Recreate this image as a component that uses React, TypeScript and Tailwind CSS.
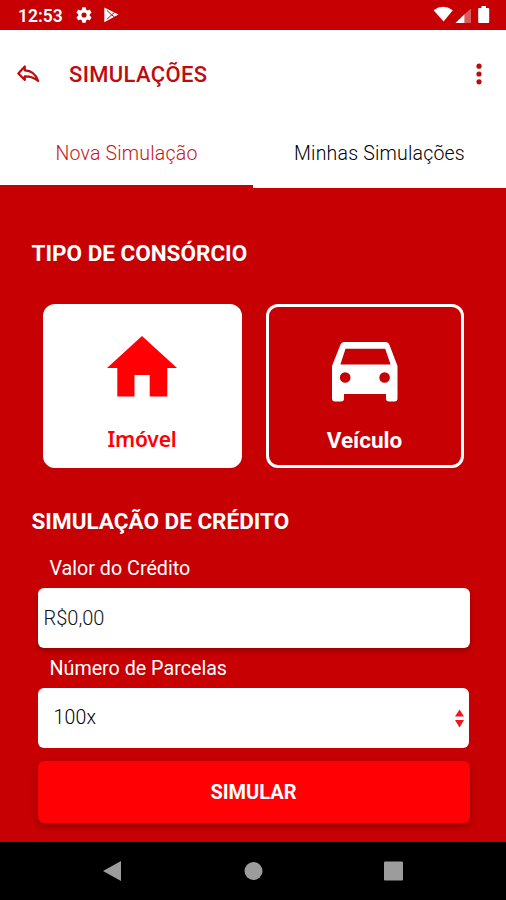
import { useState } from "react";

function StatusBar() {
  return (
    <div className="flex h-[29.5px] items-center justify-between bg-[#c60003] pr-4 pl-[18px] text-white">
      <div className="flex items-center">
        <span className="w-[45px] pt-[3px] text-[17.5px] leading-none font-semibold whitespace-nowrap">12:53</span>
        <svg width="16" height="16" viewBox="2 2 20 20" fill="currentColor" className="ml-[13px]">
          <path d="M19.14 12.94c.04-.3.06-.61.06-.94 0-.32-.02-.64-.07-.94l2.03-1.58a.49.49 0 0 0 .12-.61l-1.92-3.32a.488.488 0 0 0-.59-.22l-2.39.96c-.5-.38-1.03-.7-1.62-.94l-.36-2.54a.484.484 0 0 0-.48-.41h-3.84c-.24 0-.43.17-.47.41l-.36 2.54c-.59.24-1.13.57-1.62.94l-2.39-.96c-.22-.08-.47 0-.59.22L2.74 8.87c-.12.21-.08.47.12.61l2.03 1.58c-.05.3-.09.63-.09.94s.02.64.07.94l-2.03 1.58a.49.49 0 0 0-.12.61l1.92 3.32c.12.22.37.29.59.22l2.39-.96c.5.38 1.03.7 1.62.94l.36 2.54c.05.24.24.41.48.41h3.84c.24 0 .44-.17.47-.41l.36-2.54c.59-.24 1.13-.56 1.62-.94l2.39.96c.22.08.47 0 .59-.22l1.92-3.32c.12-.22.07-.47-.12-.61l-2.01-1.58zM12 15.2a3.2 3.2 0 1 1 0-6.4 3.2 3.2 0 0 1 0 6.4z" />
        </svg>
        <svg width="15" height="16" viewBox="0 0 15 16" className="ml-3">
          <path d="M.3.6 14.5 7.5.3 15.3Z" fill="#fff" />
          <path d="m3 3.5 4.6 4.3L3 12.4M7.6 7.8l3-2.6M7.6 7.8l3 2.2" fill="none" stroke="#c60003" strokeWidth="1" />
        </svg>
      </div>
      <svg width="57" height="18" viewBox="0 0 57 18" fill="currentColor">
        <path d="M.6 4.2Q10 -2.5 19.8 4.2L10.6 15.5Z" />
        <path d="M22.4 17 31.5 8.2V17Z" />
        <path d="M31.5 8.2 38 2.5V17h-6.500Z" opacity=".35" />
        <path d="M48.500 0h4.500v2h2.200q1 0 1 1v13q0 1-1 1h-9q-1 0-1-1V3q0-1 1-1h2.300Z" />
      </svg>
    </div>
  );
}

function Header() {
  return (
    <header className="flex h-[88px] items-center px-4 text-[#bd0c10]">
      <svg width="24" height="20" viewBox="0 0 24 20" fill="none" stroke="currentColor" strokeWidth="2.200" strokeLinejoin="round">
        <path d="M2.300 9.500 8.800 2.500V6.400C15.500 6.600 19.500 9.500 22.200 17 18 13.300 14 12.200 8.800 12.300V15.900Z" />
      </svg>
      <h1 className="ml-[29px] pt-px text-[22px] font-medium tracking-[0.35px]">SIMULAÇÕES</h1>
      <svg width="6" height="22" viewBox="0 0 6 22" fill="currentColor" className="mr-2 ml-auto">
        <circle cx="3" cy="3.200" r="2.600" />
        <circle cx="3" cy="11" r="2.600" />
        <circle cx="3" cy="18.800" r="2.600" />
      </svg>
    </header>
  );
}

function HouseIcon() {
  return (
    <svg width="70" height="61" viewBox="0 0 70 61" fill="currentColor">
      <path d="M35 0 70 32H60.300V60.500H42.700V39H27.500V60.500H10.300V32H0Z" />
    </svg>
  );
}

function CarIcon() {
  return (
    <svg width="66" height="60" viewBox="0 0 66 60" fill="currentColor" fillRule="evenodd">
      <path d="M12.500 0h41q3 0 4 3l8 21V56.500q0 3-3 3h-5.500q-3 0-3-3V52H12v4.500q0 3-3 3H3q-3 0-3-3V24L8.300 3q1.200-3 4.200-3ZM13.500 6.800 8.400 22.500H58.600L53.200 6.800ZM13.200 30.200a5.300 5.300 0 1 0 0 10.600 5.300 5.300 0 0 0 0-10.600ZM52.600 30.200a5.300 5.300 0 1 0 0 10.600 5.300 5.300 0 0 0 0-10.600Z" />
    </svg>
  );
}

export default function App() {
  const [tab, setTab] = useState("nova");
  const [type, setType] = useState("imovel");

  return (
    <div className="flex h-[900px] w-[506px] flex-col overflow-hidden bg-white font-[Roboto,sans-serif]">
      <StatusBar />
      <Header />

      <nav className="flex h-[70px] text-[19.5px] font-light">
        <button
          onClick={() => setTab("nova")}
          className={`flex-1 border-b-[3px] pt-1.5 tracking-[0.2px] ${tab === "nova" ? "border-[#c60003] text-[#c8141a]" : "border-white text-black"}`}
        >
          Nova Simulação
        </button>
        <button
          onClick={() => setTab("minhas")}
          className={`flex-1 border-b-[3px] pt-1.5 tracking-[0.2px] ${tab === "minhas" ? "border-[#c60003] text-[#c8141a]" : "border-white text-black"}`}
        >
          Minhas Simulações
        </button>
      </nav>

      <main className="flex-1 bg-[#c60003] px-[31.5px] pt-[51.5px] text-white">
        <h2 className="text-[22.5px] leading-7 font-bold">TIPO DE CONSÓRCIO</h2>

        <div className="mt-[37px] ml-[11px] flex gap-6">
          <button
            onClick={() => setType("imovel")}
            className={`flex h-[164px] w-[199px] flex-col items-center rounded-xl border-[3px] border-white pt-[29px] ${type === "imovel" ? "bg-white text-[#ff0004]" : "text-white"}`}
          >
            <HouseIcon />
            <span className="mt-[26px] font-['Noto_Sans',sans-serif] text-[21px] leading-8 font-semibold tracking-[-0.2px]">Imóvel</span>
          </button>
          <button
            onClick={() => setType("veiculo")}
            className={`flex h-[164px] w-[198px] flex-col items-center rounded-xl border-[3px] border-white pt-[35px] ${type === "veiculo" ? "bg-white text-[#ff0004]" : "text-white"}`}
          >
            <CarIcon />
            <span className="mt-[22px] text-[22.5px] leading-8 font-bold">Veículo</span>
          </button>
        </div>

        <h2 className="mt-[38.5px] text-[22.5px] leading-7 font-bold">SIMULAÇÃO DE CRÉDITO</h2>

        <div className="mr-[5px] ml-1.5">
          <label className="mt-[22px] ml-3 block text-[19.7px] leading-6">Valor do Crédito</label>
          <div className="mt-[7px] flex h-[60px] items-center rounded-md bg-white pl-1.5 text-[20px] font-light text-[#111] shadow-[0_3px_5px_rgba(0,0,0,0.25)]">
            R$0,00
          </div>
          <label className="mt-[9px] ml-3 block text-[19.7px] leading-6">Número de Parcelas</label>
          <div className="mt-[7px] mr-px flex h-[60px] items-center justify-between rounded-md bg-white pt-px pr-[5px] pl-4 text-[19.5px] font-light tracking-[0.2px] text-black">
            100x
            <svg width="9" height="19" viewBox="0 0 9 19" fill="#f5141a">
              <path d="M4.500.500 9 7.500H0ZM0 11h9l-4.500 7.500Z" />
            </svg>
          </div>
          <button className="mt-[13px] h-[62px] w-full rounded-md bg-[#ff0004] text-[20px] font-bold shadow-[0_3px_6px_rgba(0,0,0,0.3)]">
            SIMULAR
          </button>
        </div>
      </main>

      <footer className="flex h-[58px] items-center bg-black pl-[103px]">
        <svg width="301" height="22" viewBox="0 0 301 22" fill="#9c9c9c">
          <path d="M0 11 18 1V21Z" />
          <circle cx="150.500" cy="11" r="9" />
          <rect x="281" y="1.500" width="19" height="19" rx="1" />
        </svg>
      </footer>
    </div>
  );
}
